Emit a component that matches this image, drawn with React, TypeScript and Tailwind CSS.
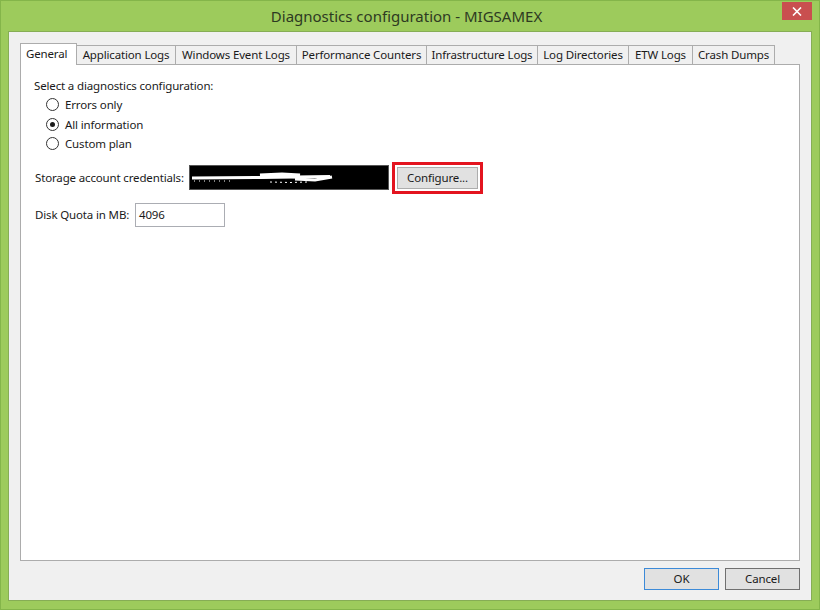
import React from "react";

const font = { fontFamily: '"Segoe UI", "Noto Sans", "Open Sans", sans-serif' };

const tabs: { label: string; w: string }[] = [
  { label: "Application Logs", w: "w-[100px]" },
  { label: "Windows Event Logs", w: "w-[122px]" },
  { label: "Performance Counters", w: "w-[131px]" },
  { label: "Infrastructure Logs", w: "w-[112px]" },
  { label: "Log Directories", w: "w-[92px]" },
  { label: "ETW Logs", w: "w-[65px]" },
  { label: "Crash Dumps", w: "w-[83px]" },
];

function Radio({ checked, label }: { checked?: boolean; label: string }) {
  return (
    <div className="flex items-center h-[19.5px]">
      <span className="w-[13px] h-[13px] rounded-full border border-[#333] bg-white flex items-center justify-center">
        {checked && <span className="w-[5px] h-[5px] rounded-full bg-[#1a1a1a]" />}
      </span>
      <span className="ml-[6px]">{label}</span>
    </div>
  );
}

export default function App() {
  return (
    <div
      className="w-[820px] h-[610px] bg-[#9dcb5c] border border-[#84b54a] flex flex-col text-[11.5px] tracking-[-0.15px] text-[#1a1a1a]"
      style={font}
    >
      {/* Title bar */}
      <div className="h-[30px] shrink-0 grid grid-cols-[1fr_auto_1fr] items-start pr-[7px]">
        <div />
        <div className="pt-[5px] text-[15px] tracking-normal text-[#2d3a22] leading-[20px]">
          Diagnostics configuration - MIGSAMEX
        </div>
        <div className="flex justify-end pt-[1px]">
          <div className="w-[30px] h-[18px] bg-[#c94f4f] flex items-center justify-center">
            <svg width="10" height="9" viewBox="0 0 10 9">
              <path d="M1 0.5 L9 8.5 M9 0.5 L1 8.5" stroke="white" strokeWidth="1.6" />
            </svg>
          </div>
        </div>
      </div>

      {/* Client area */}
      <div className="mx-[7px] h-[570px] bg-[#f0f0f0] border border-[#86ad55] flex flex-col px-[11px] pt-[11px]">
        {/* Tab strip */}
        <div className="flex items-end h-[21px] relative z-10">
          <div className="w-[57px] h-[22px] -mb-px bg-white border border-b-0 border-[#acacac] pl-[5px] pt-[1px] leading-[17px]">
            General
          </div>
          {tabs.map((t) => (
            <div
              key={t.label}
              className={`${t.w} -ml-px h-[19px] bg-[#f0f0f0] border border-b-0 border-[#acacac] flex justify-center leading-[17px] whitespace-nowrap`}
            >
              {t.label}
            </div>
          ))}
        </div>

        {/* Panel */}
        <div className="h-[497px] bg-white border border-[#acacac] pl-[13px] pt-[13px]">
          <div className="leading-[16px]">Select a diagnostics configuration:</div>
          <div className="pl-[12px] mt-[1px] flex flex-col">
            <Radio label="Errors only" />
            <Radio checked label="All information" />
            <Radio label="Custom plan" />
          </div>

          <div className="flex items-center mt-[8px] h-[32px]">
            <span className="pl-[1px] w-[155px] shrink-0 whitespace-nowrap">Storage account credentials:</span>
            <div className="w-[200px] h-[25px] shrink-0 bg-black border border-[#555] flex items-center">
              <svg width="150" height="20" viewBox="0 0 150 20">
                <path d="M2 10 L70 9.5 L140 8.5" stroke="white" strokeWidth="3" fill="none" />
                <path d="M70 8 L92 7 L110 8" stroke="white" strokeWidth="5" fill="none" />
                <path d="M105 11 L125 12 L142 9" stroke="white" strokeWidth="3" fill="none" />
                <path d="M80 14 L100 14.5 L118 14" stroke="white" strokeWidth="1" strokeDasharray="2 3" fill="none" />
                <path d="M4 13 L40 13" stroke="white" strokeWidth="1" strokeDasharray="1 4" fill="none" />
              </svg>
            </div>
            <div className="ml-[3px] w-[91px] h-[32px] shrink-0 border-[3px] border-[#e3141f] p-[2px] flex">
              <div className="flex-1 bg-[#e1e1e1] border border-[#adadad] flex items-center justify-center">
                Configure...
              </div>
            </div>
          </div>

          <div className="flex items-center mt-[6px] h-[30px]">
            <span className="pl-[1px] w-[101px] shrink-0 whitespace-nowrap">Disk Quota in MB:</span>
            <div className="w-[90px] h-[24px] shrink-0 bg-white border border-[#abadb3] flex items-center pl-[3px]">
              4096
            </div>
          </div>
        </div>

        {/* Buttons */}
        <div className="flex justify-end gap-[6px] mt-[7px]">
          <div className="w-[75px] h-[22px] bg-[#e1e1e1] border border-[#3c8ad8] flex items-center justify-center">
            OK
          </div>
          <div className="w-[75px] h-[22px] bg-[#e1e1e1] border border-[#707070] flex items-center justify-center">
            Cancel
          </div>
        </div>
      </div>
    </div>
  );
}
